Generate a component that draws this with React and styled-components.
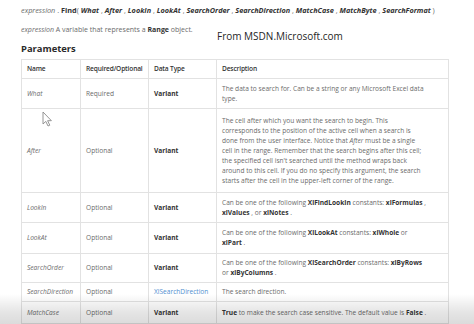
import React from "react";
import styled, { createGlobalStyle } from "styled-components";

const GlobalStyle = createGlobalStyle`
  html, body {
    margin: 0;
    padding: 0;
    background: #ffffff;
  }
  body {
    font-family: "Open Sans", "Noto Sans", sans-serif;
    color: #6b6b6b;
  }
`;

const Page = styled.div`
  position: relative;
  width: 474px;
  height: 324px;
  overflow: hidden;
  padding: 6px 0 0 21px;
  box-sizing: border-box;
`;

const Syntax = styled.div`
  font-size: 7.3px;
  line-height: 9px;
  color: #6b6b6b;
  white-space: nowrap;

  b {
    color: #333;
  }
`;

const Note = styled.div`
  margin-top: 10px;
  font-size: 7px;
  line-height: 9px;

  b {
    color: #333;
  }
`;

const Heading = styled.div`
  margin-top: 9px;
  font-size: 9.4px;
  line-height: 12px;
  font-weight: 700;
  color: #2a2a2a;
`;

const Caption = styled.div`
  position: absolute;
  left: 217px;
  top: 29px;
  font-size: 10px;
  line-height: 14px;
  color: #262626;
`;

const Table = styled.table`
  margin-top: 4px;
  width: 427px;
  border-collapse: collapse;
  table-layout: fixed;
  font-size: 6.6px;
  line-height: 10px;
`;

const Col = styled.col`
  width: ${(p) => p.w}px;
`;

const Row = styled.tr`
  height: ${(p) => p.h}px;
`;

const Head = styled.th`
  border: 1px solid #e2e2e2;
  padding: 0 4px 0 5px;
  text-align: left;
  font-weight: 600;
  letter-spacing: -0.15px;
  white-space: nowrap;
  color: #333;
  vertical-align: middle;
`;

const Cell = styled.td`
  border: 1px solid #e2e2e2;
  padding: 0 5px;
  vertical-align: middle;
  color: ${(p) => (p.link ? "#4f8fcf" : p.strong ? "#333" : "#6b6b6b")};
  font-style: ${(p) => (p.italic ? "italic" : "normal")};
  font-weight: ${(p) => (p.strong ? 700 : 400)};

  b {
    color: #333;
  }
`;

const Cursor = styled.svg`
  position: absolute;
  left: 42px;
  top: 111px;
`;

const Shade = styled.div`
  position: absolute;
  left: 0;
  right: 0;
  bottom: 0;
  height: 30px;
  background: linear-gradient(
    to bottom,
    rgba(0, 0, 0, 0),
    rgba(0, 0, 0, 0.1) 60%,
    rgba(0, 0, 0, 0.14)
  );
  pointer-events: none;
`;

const params = [
  "What",
  "After",
  "LookIn",
  "LookAt",
  "SearchOrder",
  "SearchDirection",
  "MatchCase",
  "MatchByte",
  "SearchFormat",
];

const rows = [
  {
    name: "What",
    req: "Required",
    type: "Variant",
    h: 30,
    desc: (
      <>
        The data to search for. Can be a string or any Microsoft Excel data
        <br />
        type.
      </>
    ),
  },
  {
    name: "After",
    req: "Optional",
    type: "Variant",
    h: 84,
    desc: (
      <>
        The cell after which you want the search to begin. This
        <br />
        corresponds to the position of the active cell when a search is
        <br />
        done from the user interface. Notice that <i>After</i> must be a single
        <br />
        cell in the range. Remember that the search begins after this cell;
        <br />
        the specified cell isn't searched until the method wraps back
        <br />
        around to this cell. If you do no specify this argument, the search
        <br />
        starts after the cell in the upper-left corner of the range.
      </>
    ),
  },
  {
    name: "LookIn",
    req: "Optional",
    type: "Variant",
    h: 30,
    desc: (
      <>
        Can be one of the following <b>XlFindLookIn</b> constants:{" "}
        <b>xlFormulas</b> ,
        <br />
        <b>xlValues</b> , or <b>xlNotes</b> .
      </>
    ),
  },
  {
    name: "LookAt",
    req: "Optional",
    type: "Variant",
    h: 31,
    desc: (
      <>
        Can be one of the following <b>XlLookAt</b> constants: <b>xlWhole</b>{" "}
        or
        <br />
        <b>xlPart</b> .
      </>
    ),
  },
  {
    name: "SearchOrder",
    req: "Optional",
    type: "Variant",
    h: 29,
    desc: (
      <>
        Can be one of the following <b>XlSearchOrder</b> constants:{" "}
        <b>xlByRows</b>
        <br />
        or <b>xlByColumns</b> .
      </>
    ),
  },
  {
    name: "SearchDirection",
    req: "Optional",
    type: "XlSearchDirection",
    link: true,
    h: 19,
    desc: <>The search direction.</>,
  },
  {
    name: "MatchCase",
    req: "Optional",
    type: "Variant",
    h: 22,
    desc: (
      <>
        <b>True</b> to make the search case sensitive. The default value is{" "}
        <b>False</b> .
      </>
    ),
  },
];

export default function App() {
  return (
    <>
      <GlobalStyle />
      <Page>
        <Syntax>
          <i>expression</i> . <b>Find</b>({" "}
          {params.map((p, i) => (
            <React.Fragment key={p}>
              <b>
                <i>{p}</i>
              </b>
              {i < params.length - 1 ? " , " : " )"}
            </React.Fragment>
          ))}
        </Syntax>
        <Note>
          <i>expression</i> A variable that represents a <b>Range</b> object.
        </Note>
        <Heading>Parameters</Heading>
        <Table>
          <colgroup>
            <Col w={59} />
            <Col w={68} />
            <Col w={68} />
            <Col w={232} />
          </colgroup>
          <thead>
            <Row h={19}>
              <Head>Name</Head>
              <Head>Required/Optional</Head>
              <Head>Data Type</Head>
              <Head>Description</Head>
            </Row>
          </thead>
          <tbody>
            {rows.map((r) => (
              <Row key={r.name} h={r.h}>
                <Cell italic>{r.name}</Cell>
                <Cell>{r.req}</Cell>
                <Cell strong={!r.link} link={r.link}>
                  {r.type}
                </Cell>
                <Cell>{r.desc}</Cell>
              </Row>
            ))}
          </tbody>
        </Table>
        <Caption>From MSDN.Microsoft.com</Caption>
        <Cursor width="11" height="16" viewBox="0 0 11 16">
          <path
            d="M1 1 L1 13 L3.8 10.4 L6 15 L7.8 14.2 L5.6 9.7 L9.4 9.7 Z"
            fill="#fff"
            stroke="#8a8a8a"
            strokeWidth="0.9"
            strokeLinejoin="round"
          />
        </Cursor>
        <Shade />
      </Page>
    </>
  );
}
